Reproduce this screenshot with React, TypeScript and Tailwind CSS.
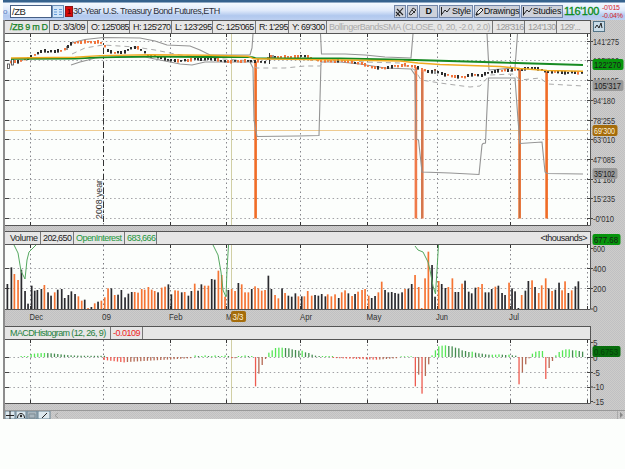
import React from "react";

const FONT = "font-['Liberation_Sans',Arial,sans-serif]";
const GREY = "bg-[repeating-conic-gradient(#c0c0c3_0_25%,#cecdca_0_50%)] bg-[length:2px_2px]";
const PALE = "bg-[#e6e6e6]";

const V_GRID = [30.5, 170.5, 226.5, 300.5, 367.5, 437.5, 510.5, 587.5];
const H_GRID = [41.5, 60.5, 80.5, 100.5, 120.5, 139.5, 159.5, 179.5, 198.5, 218.5];

const PRICE: [number, number][] = [
  [8, 66], [12, 62], [15, 61], [18, 62], [22, 61], [26, 59], [30, 58], [34, 55], [37, 54], [41, 52], [44, 51], [48, 52], [52, 51], [60, 51],
  [64, 50], [67, 48], [70, 45], [73, 43], [76, 42], [100, 42], [103, 44], [106, 48], [109, 51], [112, 52], [116, 53], [120, 52], [124, 52],
  [128, 50], [132, 48], [136, 47], [140, 49], [144, 52], [148, 55], [152, 56], [160, 57], [165, 59], [170, 60], [182, 61], [190, 60], [196, 59],
  [215, 59], [222, 61], [228, 62], [235, 61], [248, 61], [253, 62], [258, 61], [264, 63], [269, 57], [278, 57], [290, 57], [302, 56], [307, 56],
  [312, 59], [320, 60], [330, 61], [348, 61], [356, 63], [362, 64], [370, 67], [384, 68], [390, 67], [404, 65], [412, 66], [421, 69], [426, 71],
  [430, 72], [435, 70], [440, 73], [446, 75], [458, 77], [464, 77], [470, 75], [482, 75], [488, 73], [495, 71], [510, 70], [523, 69], [530, 68],
  [540, 69], [545, 71], [549, 72], [583, 73],
];

function priceAt(x: number) {
  for (let i = 1; i < PRICE.length; i++) {
    const [x0, y0] = PRICE[i - 1];
    const [x1, y1] = PRICE[i];
    if (x <= x1) return y0 + ((y1 - y0) * (x - x0)) / (x1 - x0);
  }
  return 73;
}

// Each entry: x in thirds of a pixel, o(range)/b(lack), height in thirds of a pixel.
const VOLUME = `22b75 34b125 43o105 54o87 64b118 75b54 84b16 95b70 104b55 112b57 124b60 133o72 144b50 153b40 164o50 173b58 185b60 194b33 205b42 214b53 225b45 235o38 245o25 254b28 264o3 274b6 284o17 294b22 304o25 314o35 324o62 334b62 344o42 354b43 364b57 375b35 385b46 395b51 404o51 414o49 425o60 434o58 445o66 455o58 464o54 474b50 485o64 495o67 505b74 514b44 525o56 534o55 545b50 554o51 565b40 574b54 584o76 594b55 604b74 614o70 625o70
635b90 644b88 655o115 665o102 675o37 685b57 695o60 705o54 715b78 725o74 735o50 745o50 755b60 765o68 775o62 785o55 795o57 805b100 814b60 825o42 835o32 846b62 855o48 865b40 875b37 886b47 895o38 905b38 913o38 923o54 935o40 945b42 955b40 965b45 976b38 983o44 994o38 1005o44 1016b33 1025o50 1035o56 1045b47 1056o39 1065b45 1074o52 1086o57 1095o60 1106o40 1115b33 1125b39 1135o50 1145o82 1155b57 1165b50 1175b51 1185b48 1195b46 1206b50 1215o60 1225b61 1235b75 1245o102
1256o66 1265o3 1275o92 1285o172 1296b132 1305b37 1316o84 1325b75 1336b63 1345o66 1357o92 1366b51 1375b51 1386o76 1395b85 1406b52 1415b47 1426b64 1435o66 1446o75 1456b50 1466b50 1475b60 1486o67 1495b70 1506b48 1515b42 1527o79 1536b62 1545b53 1555b3 1565o42 1576b55 1585b84 1596o86 1605b66 1616o48 1625o71 1637o92 1646b62 1656o54 1666b58 1677b79 1686o56 1695o83 1705b48 1715o56 1726b68 1735b83`
  .split(/\s+/)
  .map((s) => {
    const m = s.match(/(\d+)([ob])(\d+)/)!;
    return { x: +m[1] / 3, up: m[2] === "b", h: +m[3] / 3 };
  });

function macdSeries(): [number, number][] {
  const out: [number, number][] = [];
  for (let i = 0; i < 26; i++) out.push([21 + i * 3.33, i < 3 ? 1 : 1.2 + 2.8 * Math.exp(-Math.pow((i - 7) / 6, 2))]);
  for (let i = 0; i < 27; i++) out.push([104 + i * 3.33, i < 7 ? -3 - i * 0.4 : -5 + (i - 7) * 0.2]);
  for (let i = 0; i < 18; i++) out.push([195 + i * 3.33, i > 10 && i < 13 ? -1.2 : i % 3 ? 1 : 1.6]);
  const peak = [-88, -50, -24, -6, 13, 20, 27, 28, 28, 27, 26, 23, 21, 19, 19, 14, 12, 7, 4];
  peak.forEach((v, i) => out.push([255.4 + i * 3.33, v / 3]));
  for (let i = 0; i < 5; i++) out.push([319 + i * 3.33, 1]);
  for (let i = 0; i < 20; i++) out.push([333 + i * 3.33, -1 - (i < 14 ? i * 0.13 : (20 - i) * 0.25)]);
  for (let i = 0; i < 4; i++) out.push([401 + i * 3.33, 0.7]);
  const late = [
    -88, -53, -110, -57, -22, 5, 20, 32, 34, 35, 33, 32, 28, 26, 20, 18, 15, 16, 13, 11, 10, 8, 7, 7, 7, 8, 7, 6, 7, 5, 4, -82, -46, -22, -4, 10,
    16, 18, 18, -66, -33, -12, 5, 15, 20, 23, 23, 20, 20, 18, 16,
  ];
  late.forEach((v, i) => out.push([415.2 + i * 3.345, v / 3]));
  return out;
}
const MACD = macdSeries();

function Txt({ x, y, w, fill = "#333", size = 9, children }: { x: number; y: number; w: number; fill?: string; size?: number; children: string }) {
  return (
    <text x={x} y={y} fontSize={size} fill={fill} textLength={w} lengthAdjust="spacingAndGlyphs">
      {children}
    </text>
  );
}

function Grid({ top, bottom, rows }: { top: number; bottom: number; rows: number[] }) {
  return (
    <g>
      {V_GRID.map((x) => (
        <g key={x}>
          <line x1={x} x2={x} y1={top} y2={bottom} stroke="#85858b" strokeDasharray="1.5 3" />
          <line x1={x} x2={x} y1={top} y2={top + 3} stroke="#333" />
          <line x1={x} x2={x} y1={bottom - 3} y2={bottom} stroke="#333" />
        </g>
      ))}
      <line x1="103.5" x2="103.5" y1={top} y2={bottom} stroke="#77777d" strokeDasharray="1.5 3" />
      {rows.map((y) => (
        <g key={y}>
          <line x1="5" x2="590" y1={y} y2={y} stroke="#a2a2a6" strokeDasharray="1.5 2.7" />
          <line x1="5" x2="9" y1={y} y2={y} stroke="#444" />
          <line x1="587" x2="590" y1={y} y2={y} stroke="#444" />
        </g>
      ))}
    </g>
  );
}

function PricePlot() {
  const band = { fill: "none", stroke: "#949494", strokeWidth: 1.1 };
  const candles = Array.from({ length: 173 }, (_, i) => 8 + i * 3.335);
  return (
    <svg className="block h-[192px] w-[586px]" viewBox="5 34 586 192">
      <Grid top={34} bottom={225} rows={H_GRID} />
      <line x1="103.5" x2="103.5" y1="34" y2="225" stroke="#333" strokeDasharray="6 3 2 3" />
      <line x1="5" x2="590" y1="130.5" y2="130.5" stroke="#eecb91" />
      <line x1="231.5" x2="231.5" y1="34" y2="225" stroke="#d1cfa5" />
      {[255.5, 415.8, 422.2, 519.5, 546.5].map((x) => (
        <rect key={x} x={x - 1.2} y={priceAt(x)} width="2.6" height={218.5 - priceAt(x)} fill={x === 415.8 || x === 422.2 ? "#ef7a49" : "#f06c26"} />
      ))}
      <path d="M422 72V218M519.7 70V218" stroke="#aa7355" strokeWidth=".8" />
      <polyline {...band} points="72,43 79,41 85,39.5 103,37.5 140,38 155,41 167,45 190,46 200,50 210,55 250,55 252,48 253,34" />
      <polyline {...band} points="320.5,34 321.5,54 345,54 365,55 385,57 411,58 413,34" />
      <polyline {...band} points="487,34 489,70 515,68 517.5,34" />
      <polyline {...band} points="71,65 80,62 88,60 95,58 120,57 145,57 165,61 180,64 192,65 205,62 250,62 253,68 254,120 257,136.5 298,136 319,135.5 321,62 340,62 360,64 385,68 411,69 415,75 416,139 418.5,140 422,172 450,173 479,174.5 482,145 483,143.5 485.5,143 486.5,120 488.5,78 515,78 518,120 520,143.5 542,142 545,172 547,173.5 583,174" />
      <polyline
        fill="none" stroke="#aaa" strokeDasharray="5 4"
        points="72,54 85,48 103,45 135,47 155,50 180,55 210,58 252,61 256,68 285,68 305,66 320,66 326,59 365,62 400,63 415,70 421,80 440,83 470,87 480,86 490,75 513,74 520,80 540,78 548,84 583,86"
      />
      {candles.map((x, i) => {
        const orange = (((i / 3) | 0) * 7 + ((i / 4) | 0) * 5) % 11 < 5 || (x > 78 && x < 108);
        const h = 1.8 + ((i * 5) % 4) * 0.6;
        return <rect key={i} x={Math.round(x) - 1} y={Math.round(priceAt(x) - h / 2)} width="2" height={h} fill={orange ? "#f0743c" : "#2c2c2c"} />;
      })}
      <rect x="7.5" y="64" width="2" height="4.5" fill="#fff" stroke="#444" strokeWidth=".8" />
      <rect x="11.5" y="59" width="2" height="6" fill="#fff" stroke="#444" strokeWidth=".8" />
      <path d="M67 46v4M269.5 53v11M273 55v3M435 69v5" stroke="#333" />
      <polyline fill="none" stroke="#178a22" strokeWidth="1.8" points="11,58.8 75,58.6 100,57.3 150,56.6 205,57 252,57.2 256,58.3 340,58.3 415,60 500,62.5 583,65" />
      <polyline fill="none" stroke="#f0aa20" strokeWidth="1.4" points="11,58 75,57.3 100,55.6 150,54.7 210,55.2 248,56.3 254,58.8 290,59.4 345,60 400,61 418,63 440,64.5 500,66.5 520,68.5 547,70.5 583,71.3" />
      <text transform="translate(101.5 219) rotate(-90)" fontSize="9" fill="#333" textLength="39" lengthAdjust="spacingAndGlyphs">
        2008 year
      </text>
      <path d="M5 225.5H590.5V34" fill="none" stroke="#555" />
    </svg>
  );
}

function Badge({ x = 592.5, y, w, fill, text, color = "#1a1a1a" }: { x?: number; y: number; w: number; fill: string; text: string; color?: string }) {
  return (
    <g>
      <rect x={x} y={y} width={w} height="11" rx="2" fill={fill} />
      <Txt x={x + 1.5} y={y + 8.8} w={w - 4} fill={color}>
        {text}
      </Txt>
    </g>
  );
}

function Ticks({ items }: { items: [string, number, number][] }) {
  return (
    <g>
      {items.map(([t, y, w]) => (
        <g key={t}>
          <line x1="591" x2="593" y1={y} y2={y} stroke="#444" />
          <Txt x={593} y={y + 3.3} w={w}>{t}</Txt>
        </g>
      ))}
    </g>
  );
}

function VolumePlot() {
  return (
    <svg className="block h-[65px] w-[586px]" viewBox="5 245 586 65">
      <Grid top={245} bottom={309} rows={[268.5, 288.5]} />
      <line x1="231.5" x2="231.5" y1="245" y2="309" stroke="#d1cfa5" />
      {VOLUME.map((v, i) => (
        <rect key={i} x={v.x - 0.8} y={309 - v.h} width="1.7" height={v.h} fill={v.up ? "#2a2a2e" : "#f57433"} />
      ))}
      <g fill="none" stroke="#55a860">
        <polyline points="14,245 18,253 21,271 25,279 27,260 29,252 36,245" />
        <polyline points="213,245 218,255 221,272 223,290 226,297 227,270 228.5,245" />
        <polyline points="415,246 418,250 423,252 428,262 430,270 433,286 435.5,294 437,270 438.5,245" />
      </g>
      <path d="M5 309.5H590.5V245" fill="none" stroke="#555" />
    </svg>
  );
}

function MacdPlot() {
  return (
    <svg className="block h-[64px] w-[586px]" viewBox="5 340 586 64">
      <Grid top={340} bottom={403} rows={[357.5, 372.5, 387.5]} />
      <line x1="231.5" x2="231.5" y1="340" y2="403" stroke="#d1cfa5" />
      {MACD.map(([x, h], i) => {
        const rising = i === 0 || h >= MACD[i - 1][1];
        const fill = h > 0 ? (rising ? "#57e657" : "#458c50") : rising ? "#b56a55" : "#ee5b50";
        return <rect key={i} x={x - 0.5} y={h > 0 ? 357 - h : 357} width="1.3" height={Math.abs(h)} fill={fill} />;
      })}
      <path d="M5 403.5H590.5V340" fill="none" stroke="#555" />
    </svg>
  );
}

function Cell({ className, children }: { className: string; children?: React.ReactNode }) {
  return <div className={`h-full shrink-0 overflow-hidden whitespace-pre border-r border-[#777] ${className}`}>{children}</div>;
}

const HEADER = `flex h-[14px] w-[586px] border-y border-r border-[#555] text-[9px] leading-[13px] text-[#222] ${PALE}`;
const BTN = "flex h-[13px] shrink-0 items-center justify-center border border-[#7286a8] bg-[#cdd1da] text-[9px] leading-none text-[#111]";

function PenIcon() {
  return (
    <svg className="h-[9px] w-[9px] shrink-0" viewBox="0 0 9 9" fill="none" stroke="#222">
      <path d="M1 8 2 5 6 1 8 3 4 7Z" fill="#eee" />
      <path d="M1 8l2-1" strokeWidth="1.5" />
    </svg>
  );
}
function ChartIcon() {
  return (
    <svg className="h-[9px] w-[10px] shrink-0" viewBox="0 0 10 9" fill="none" stroke="#222">
      <path d="M.5 0V8.5M1 7 4 3 6 5 9 1" />
    </svg>
  );
}

export default function App() {
  return (
    <div className={`h-[469px] w-[625px] overflow-hidden bg-[#fcfefc] pl-[3px] ${FONT}`}>
      <div className="h-[3px] bg-[linear-gradient(#35628d_0_2px,#8fa9c5_2px)]" />
      <div className="flex h-[17px] items-center bg-[linear-gradient(#f4faff,#dfe9fa_45%,#b1c8ee_75%,#bdd0f1)]">
        <div className="w-[7px] text-[8px] leading-none text-[#5880c0]">o</div>
        <div className="h-[13px] w-[42px] border border-[#465f85] bg-white pl-px text-[9.5px] leading-[12px] tracking-[-0.5px] text-[#222]">/ZB</div>
        <div className="flex h-[13px] w-[12px] items-center justify-center border border-[#688db7] bg-[#d1e5f9]">
          <svg className="h-[8px] w-[8px]" viewBox="0 0 8 8" stroke="#659bd9">
            <path d="M0 1.5h3M5 1.5h3M0 4h3M5 4h3M0 6.5h3M5 6.5h3" />
          </svg>
        </div>
        <div className="ml-px flex h-[11px] w-[8px] items-center justify-center border border-[#8d1515] bg-[#d80909] text-[7px] font-bold leading-none text-[#600]">1</div>
        <div className="w-[321px] whitespace-pre pl-[0px] text-[9px] tracking-[-0.5px] text-[#2b303a]">30-Year U.S. Treasury Bond Futures,ETH</div>
        <div className="flex w-[170px] gap-px tracking-[-0.25px]">
          <div className={`w-[12px] ${BTN}`}>
            <svg className="h-[10px] w-[10px]" viewBox="0 0 10 10" stroke="#222" fill="none">
              <path d="M1 9 8 1M2 2l6 6M1 5l4 4" strokeWidth="1.1" />
            </svg>
          </div>
          <div className={`w-[11px] ${BTN}`}>
            <svg className="h-[9px] w-[9px]" viewBox="0 0 9 9" stroke="#333" fill="none">
              <path d="M1 7 5 1l3 2-5 5zM4 3l3 3" />
            </svg>
          </div>
          <div className={`w-[19px] font-bold ${BTN}`}>D</div>
          <div className={`w-[34px] gap-px ${BTN}`}><ChartIcon />Style</div>
          <div className={`w-[46px] ${BTN}`}><PenIcon />Drawings</div>
          <div className={`w-[42px] ${BTN}`}><ChartIcon />Studies</div>
        </div>
        <div className="w-[38px] whitespace-pre text-[11px] tracking-[-0.45px] text-[#078b16] [-webkit-text-stroke:0.3px_#078b16]">116'100</div>
        <div className="flex flex-col text-[7px] leading-[8px] tracking-[-0.25px] text-[#d71f2d]">
          <span>-0'015</span>
          <span>-0.04%</span>
        </div>
      </div>

      <div className={`h-[399px] border-l-2 border-[#8d8d8d] ${GREY}`}>
        <div className="flex h-[206px]">
          <div className="w-[586px] shrink-0 bg-[#fcfefc]">
            <div className={HEADER}>
              <Cell className="w-[45px] pl-[5px] tracking-[-0.3px] text-[#168327] [-webkit-text-stroke:0.25px_#168327]">/ZB 9 m D</Cell>
              <Cell className="w-[38px] pl-[3px] tracking-[-0.5px]">D: 3/3/09</Cell>
              <Cell className="w-[42px] pl-[3px] tracking-[-0.57px]">O: 125'085</Cell>
              <Cell className="w-[42px] pl-[3px] tracking-[-0.57px]">H: 125'270</Cell>
              <Cell className="w-[41px] pl-[3px] tracking-[-0.5px]">L: 123'295</Cell>
              <Cell className="w-[43px] pl-[3px] tracking-[-0.55px]">C: 125'065</Cell>
              <Cell className="w-[33px] pl-[3px] tracking-[-0.55px]">R: 1'295</Cell>
              <Cell className="w-[38px] pl-[3px] tracking-[-0.5px]">Y: 69'300</Cell>
              <Cell className="w-[166px] pl-[2px] tracking-[-0.48px] text-[#aaa]">BollingerBandsSMA (CLOSE, 0, 20, -2.0, 2.0)</Cell>
              <Cell className="w-[32px] pl-[3px] tracking-[-0.6px] text-[#999]">128'316</Cell>
              <Cell className="w-[32px] pl-[3px] tracking-[-0.6px] text-[#999]">124'130</Cell>
              <div className="pl-[3px] tracking-[-0.57px] text-[#999]">129'...</div>
            </div>
            <PricePlot />
          </div>
          <svg className="block h-[206px] w-[34px] shrink-0 overflow-visible" viewBox="591 20 34 206">
            <rect x="593.5" y="21.5" width="11" height="10" fill="#c9dce8" stroke="#547487" />
            <path d="M595 28l2-3 2 3 2-5 1 5" fill="none" stroke="#222" />
            <Ticks
              items={[["141'275", 41.5, 26], ["125'820", 60.5, 26], ["110'105", 80.5, 26], ["94'180", 100.5, 22], ["78'255", 120.5, 22], ["63'010", 139.5, 22], ["47'085", 159.5, 22], ["31'160", 179.5, 22], ["15'235", 198.5, 22], ["-0'010", 218.5, 21]]}
            />
            <Badge y={59} w={31} fill="#07950d" text="122'270" />
            <Badge y={80} w={31} fill="#999" text="105'317" />
            <Badge y={125} w={25} fill="#a56c0b" text="69'300" color="#fff2d9" />
            <Badge y={168} w={25} fill="#999" text="35'102" />
          </svg>
        </div>
        <div className="h-[5px]" />

        <div className="flex h-[79px]">
          <div className="w-[586px] shrink-0 bg-[#fcfefc]">
            <div className={HEADER}>
              <Cell className="w-[36px] pl-[5px] tracking-[-0.4px]">Volume</Cell>
              <Cell className="w-[33px] pl-[2px] tracking-[-0.6px]">202,650</Cell>
              <Cell className="w-[51px] pl-[2px] tracking-[-0.55px] text-[#24963b]">OpenInterest</Cell>
              <Cell className="w-[32px] pl-[2px] tracking-[-0.6px] text-[#24963b]">683,666</Cell>
              <div className="ml-auto pr-[3px] tracking-[-0.5px]">&lt;thousands&gt;</div>
            </div>
            <VolumePlot />
          </div>
          <svg className="block h-[79px] w-[34px] shrink-0 overflow-visible" viewBox="591 231 34 79">
            <Ticks items={[["600", 248.5, 12], ["400", 268.5, 13], ["200", 288.5, 13], ["0", 309, 4.5]]} />
            <Badge y={234} w={28} fill="#07950d" text="677.68" />
          </svg>
        </div>

        <svg className="block h-[16px] w-[620px]" viewBox="5 310 620 16">
          <Txt x={29.5} y={320} w={13.5}>Dec</Txt>
          <Txt x={102} y={320} w={9}>09</Txt>
          <Txt x={169} y={320} w={13.5}>Feb</Txt>
          <Txt x={226} y={320} w={12}>Mar</Txt>
          <Txt x={300} y={320} w={12}>Apr</Txt>
          <Txt x={366.5} y={320} w={15}>May</Txt>
          <Txt x={436} y={320} w={12}>Jun</Txt>
          <Txt x={509} y={320} w={10}>Jul</Txt>
          <Badge x={231} y={311} w={15} fill="#a56c0b" text="3/3" color="#fff2d9" />
        </svg>

        <div className="flex h-[78px]">
          <div className="w-[586px] shrink-0 bg-[#fcfefc]">
            <div className={HEADER}>
              <Cell className="w-[106px] pl-[5px] tracking-[-0.62px] text-[#24803b]">MACDHistogram (12, 26, 9)</Cell>
              <Cell className="w-[32px] pl-[2px] tracking-[-0.5px] text-[#ee251e]">-0.0109</Cell>
            </div>
            <MacdPlot />
          </div>
          <svg className="block h-[78px] w-[34px] shrink-0 overflow-visible" viewBox="591 326 34 78">
            <Ticks items={[["5", 342.5, 4.5], ["0", 357.5, 4.5], ["-5", 372.5, 7], ["-10", 387, 11], ["-15", 401.5, 11]]} />
            <Badge y={346} w={28} fill="#086d0d" text="0.6753" color="#063f0b" />
          </svg>
        </div>

        <div className="h-[7px] border-b border-[#999]" />
        <div className="flex h-[8px] items-center">
          <svg className="h-[8px] w-[58px]" viewBox="5 411 58 8">
            <path d="M5 411h10v8H5zM16 411h10v8H16zM38 411h12v8H38z" fill="#dce8ee" stroke="#688494" />
            <path d="M27 411h10v8H27z" fill="#a9b6be" stroke="#688494" />
            <path d="M10 411v8M6 415.5h8M17.5 418c0-6 7-6 7 0M42 418l5-5" fill="none" stroke="#222" />
            <path d="M29 414h6v4h-6z" fill="none" stroke="#7d8b93" />
            <circle cx="21" cy="416" r="1.2" fill="#222" />
            <path d="M58 413l-3 2.5 3 2.5" fill="none" stroke="#999" />
          </svg>
          <svg className="ml-auto h-[8px] w-[10px]" viewBox="0 0 10 8">
            <path d="M2.5 0v8" stroke="#aaa" />
            <path d="M5 1l3 3-3 3z" fill="#888" />
          </svg>
        </div>
      </div>
    </div>
  );
}
